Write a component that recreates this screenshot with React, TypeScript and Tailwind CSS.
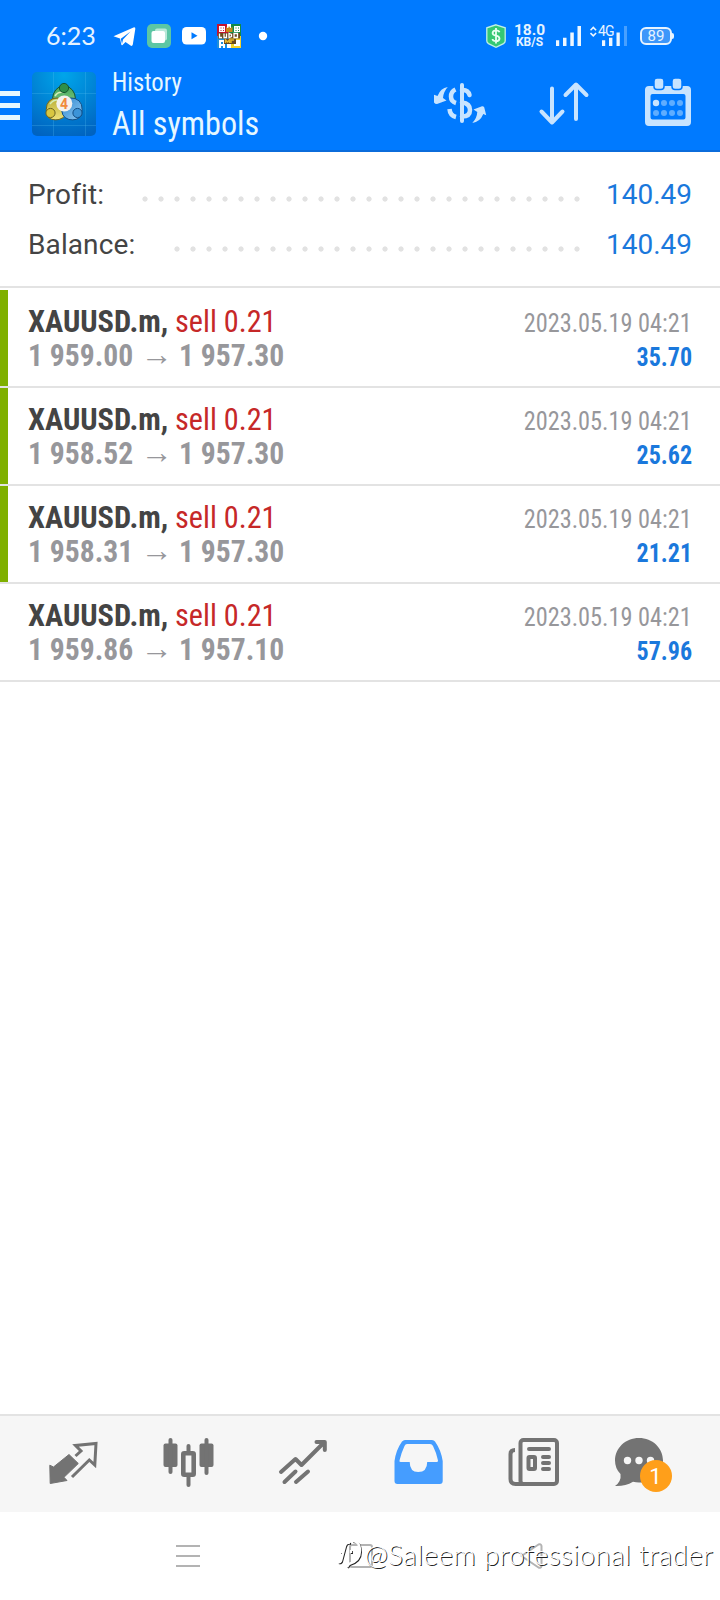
import type { ReactNode } from "react";

const deals = [
  { open: "1 959.00", close: "1 957.30", profit: "35.70", marked: true },
  { open: "1 958.52", close: "1 957.30", profit: "25.62", marked: true },
  { open: "1 958.31", close: "1 957.30", profit: "21.21", marked: true },
  { open: "1 959.86", close: "1 957.10", profit: "57.96", marked: false },
];

function StatusBar() {
  return (
    <div className="flex h-[71px] items-start pt-[24px] text-[#e6f3ff]">
      <div className="ml-[46px] w-[66px] font-['Lato',sans-serif] text-[25px] leading-[23px]">6:23</div>
      <svg className="h-6 w-[156px]" viewBox="112 24 156 24">
        <path fill="#fff" d="M113.5 36.2 133.5 27.4Q135.600 26.800 135.300 29L132.800 44.500Q132.300 46.500 130.500 45.600L125.500 42 122.500 45Q121.600 45.600 121.300 44.500L120 38.500Z" />
        <path d="M120.800 38.800 130.500 31.500 123 39.500 122 44" fill="#007aff" />
        <rect x="147" y="24" width="24" height="24" rx="5" fill="#5cc6a4" />
        <rect x="155" y="28.500" width="12" height="12" rx="2" fill="#b9e8d8" />
        <rect x="151.500" y="31" width="13.500" height="12" rx="2" fill="#fff" />
        <rect x="182" y="27" width="24" height="17.500" rx="4.500" fill="#fff" />
        <path d="M191.500 32.300v7l6-3.500z" fill="#007aff" />
        <path fill="#c4122f" d="M217 24h12v12h-12z" />
        <path fill="#128a4a" d="M229 24h12v12h-12z" />
        <path fill="#1f8fd8" d="M217 36h12v12h-12z" />
        <path fill="#f2d32c" d="M229 36h12v12h-12z" />
        <path fill="#fff" d="M219 26h6v6h-6zM234 26h6v6h-6zM219 40h6v8h-6zM234 40h6v6h-6zM227 24h4v4h-4zM227 44h4v4h-4z" />
        <path fill="#c4122f" d="M220.500 27.500h1v1h-1zM223 27.500h1v1h-1zM220.500 30h1v1h-1zM223 30h1v1h-1z" />
        <path fill="#128a4a" d="M235.500 27.500h1v1h-1zM238 27.500h1v1h-1zM235.500 30h1v1h-1zM238 30h1v1h-1z" />
        <path fill="#1f8fd8" d="M221 42h2v2h-2zM221 46h2v2h-2z" />
        <path fill="#c98a1b" d="M226 26.500 228 28.500 229 26 230.500 28.500 232.500 26.500V32h-6.500z" />
        <path fill="#6b4a20" d="M218 33h22v5.500h-22zM224 39h12v5h-12z" />
        <path stroke="#fff" strokeWidth="1.300" fill="none" d="M219.500 33.500v4h2.500M224 33.500v4h2.500v-4M229 33.500v4l2.500-1v-2zM234 33.500h3.500v4H234z" />
        <path stroke="#e8b92c" strokeWidth="1.400" fill="none" d="M225.500 43v-3l2 2 2-2v3M231 43v-3h3" />
        <circle cx="263" cy="36" r="4.200" fill="#fff" />
      </svg>
      <svg className="ml-[218px] h-6 w-5" viewBox="0 0 20 24">
        <path d="M10 .8 19.200 3.800V17Q19.200 18.600 17.500 19.600L10 23.300 2.500 19.600Q.8 18.600.8 17V3.800Z" fill="#35c874" stroke="#bff0e4" strokeWidth="1.300" />
        <path d="M13.500 8.300Q12.900 6.300 10 6.300T6.600 8.900Q6.600 11 10 11.600T13.500 14.600Q13.300 17.200 10 17.200T6.500 15M10 4v15.500" fill="none" stroke="#e6fff2" strokeWidth="1.800" />
      </svg>
      <div className="ml-[5px] flex w-[37px] flex-col items-center font-['Roboto',sans-serif] font-bold">
        <span className="text-[15.500px] leading-[13px]">18.0</span>
        <span className="text-[12px] leading-[11px]">KB/S</span>
      </div>
      <svg className="ml-[7px] h-6 w-[26px]" viewBox="555 24 26 24" fill="#eef7ff">
        <path d="M556 40.300h3.200V46H556zM563 37.700h3.500V46H563zM570.300 32.500h3.500V46h-3.500zM577.500 26h3.500v20h-3.500z" />
      </svg>
      <div className="relative ml-[9px] h-6 w-[38px]">
        <svg className="h-6 w-[38px]" viewBox="591 24 38 24" fill="#eef7ff">
          <path d="M591.500 30.300 594.300 27.500 597.100 30.300M591.500 33 594.300 35.800 597.100 33" fill="none" stroke="#eef7ff" strokeWidth="1.600" />
          <path d="M603 40.300h3.200V46H603zM610 37.700h3.400V46H610zM617.500 32.500h3.300V46h-3.300z" />
          <path d="M625 26h3v20h-3z" opacity=".3" />
        </svg>
        <span className="absolute left-[8px] top-px font-['Roboto',sans-serif] text-[14px] leading-[13px] tracking-[-0.800px]">4G</span>
      </div>
      <div className="ml-[12px] mt-[3px] flex items-center">
        <div className="flex h-[18px] w-[32px] items-center justify-center rounded-[6px] border-2 border-[#e6f3ff] bg-[#3d97fa] font-['Roboto',sans-serif] text-[15px] leading-none">89</div>
        <div className="h-[6px] w-[2px] rounded-r bg-[#e6f3ff]" />
      </div>
    </div>
  );
}

function AppLogo() {
  return (
    <svg className="ml-3 mt-px h-16 w-16" viewBox="0 0 64 64">
      <defs>
        <radialGradient id="logoBg" cx=".5" cy=".05" r="1">
          <stop offset="0" stopColor="#00a5ea" />
          <stop offset="1" stopColor="#0063c0" />
        </radialGradient>
        <linearGradient id="logoGreen" x1="0" y1="0" x2="0" y2="1">
          <stop offset="0" stopColor="#3fa557" />
          <stop offset="1" stopColor="#8fd08c" />
        </linearGradient>
        <linearGradient id="logoYellow" x1="0" y1="0" x2="0" y2="1">
          <stop offset="0" stopColor="#b9ae36" />
          <stop offset="1" stopColor="#efe27b" />
        </linearGradient>
        <linearGradient id="logoBlue" x1="0" y1="0" x2="1" y2="1">
          <stop offset="0" stopColor="#2f87cf" />
          <stop offset="1" stopColor="#8cc8f2" />
        </linearGradient>
      </defs>
      <rect width="64" height="64" rx="5" fill="url(#logoBg)" />
      <path d="M0 21.500h64M0 53.500h64M21.500 0v64M53.500 0v64" stroke="#5cc4f5" strokeOpacity=".25" />
      <path d="M32 13Q43 16 43.500 27 44 36 32 37 20 36 20.500 27 21 16 32 13Z" fill="url(#logoGreen)" stroke="#17552f" />
      <path d="M15 44Q12 30 21 26.500 31 24 34 33 37 45 27 47.500 19 49 15 44Z" fill="url(#logoYellow)" stroke="#6b6320" />
      <path d="M49 44Q53 30 43 26.500 33 24 30 33 28 45 37 47.500 45 49 49 44Z" fill="url(#logoBlue)" stroke="#124d84" />
      <path d="M23 24Q26 19 32 20.500M18 32Q21 28 25 28" fill="none" stroke="#d6efb8" strokeWidth="1.500" />
      <circle cx="32" cy="16" r="4.600" fill="#2f8f48" stroke="#17552f" />
      <circle cx="18.500" cy="41" r="4.600" fill="#d8c640" stroke="#6b6320" />
      <circle cx="45.500" cy="41" r="4.600" fill="#3c94d8" stroke="#124d84" />
      <circle cx="32.300" cy="31.500" r="8" fill="#f4f1ee" />
      <text x="32" y="36.500" textAnchor="middle" fontFamily="Roboto, sans-serif" fontSize="14" fontWeight="700" fill="#f08a3c">4</text>
    </svg>
  );
}

function HeaderActions() {
  return (
    <div className="ml-auto flex pr-[26px]">
      <svg className="mt-[6px] h-14 w-14" viewBox="431 77 56 56" fill="none" stroke="#c8e4ff" strokeWidth="4" strokeLinecap="round">
        <path d="M462 85v36" />
        <path d="M455.500 89.500Q451 91.500 451 96.500T456 103" strokeWidth="4.500" strokeLinecap="butt" />
        <path d="M462 90Q468 89.500 469.500 95" strokeWidth="4.500" />
        <path d="M462 102.500Q470 103.500 470 110T462 116.500" strokeWidth="4.500" />
        <path d="M449.500 109Q450 115.500 456 117" strokeWidth="4.500" strokeLinecap="butt" />
        <path stroke="none" fill="#c8e4ff" d="M447.800 87Q440.500 88 437.500 96L434 94.800V102.500Q435 104 437 104L446.500 100.500 443 98Q443.500 91.500 447.800 87ZM472.300 123Q480 122 483.300 114L486.200 115.200 484.200 107.200Q483.500 106 482 106.200L473.500 109.500 477.300 112Q477 118 472.300 123Z" />
      </svg>
      <svg className="ml-[49px] mt-[6px] h-14 w-14" viewBox="536 77 56 56" fill="none" stroke="#c8e4ff" strokeWidth="4" strokeLinecap="round" strokeLinejoin="round">
        <path d="M552 88.500V122M541.500 111.500 552 122.500 562.500 111.500M576 119V85M565.500 95 576 84.500 586.500 95" />
      </svg>
      <svg className="ml-[49px] mt-[6px] h-14 w-[53px]" viewBox="641 77 53 56">
        <path fillRule="evenodd" fill="#c8e4ff" d="M649 86h38q4 0 4 4v32q0 4-4 4h-38q-4 0-4-4V90q0-4 4-4ZM652.500 94q-2 0-2 2v21.500q0 2 2 2h31q2 0 2-2V96q0-2-2-2Z" />
        <rect x="654" y="78" width="10" height="11.500" rx="3" fill="#c8e4ff" stroke="#007aff" strokeWidth="1.500" />
        <rect x="672" y="78" width="10" height="11.500" rx="3" fill="#c8e4ff" stroke="#007aff" strokeWidth="1.500" />
        <circle cx="656" cy="103" r="3.200" fill="#c8e4ff" />
        {[664, 672, 680].map((x) => <circle key={x} cx={x} cy="103" r="3" fill="#5fadff" />)}
        {[656, 664, 672, 680].map((x) => <circle key={x} cx={x} cy="113" r="3" fill="#5fadff" />)}
      </svg>
    </div>
  );
}

function Total({ label, value, dots }: { label: string; value: string; dots: string }) {
  return (
    <div className="flex h-[50px] items-center pr-[28px] pl-[28px] text-[28px]">
      <span className="tracking-[0.100px] text-[#444]">{label}</span>
      <span className={`${dots} mt-[8px] ml-auto h-[6px] bg-[radial-gradient(circle,#e2e2e2_2.200px,transparent_3px)] bg-[length:16px_6px]`} />
      <span className="w-[107px] text-right text-[#1a78dc]">{value}</span>
    </div>
  );
}

function Tab({ box, children }: { box: string; children: ReactNode }) {
  return <svg className="h-24 w-[115px]" viewBox={box}>{children}</svg>;
}

export default function App() {
  return (
    <div className="relative flex h-[1600px] w-[720px] flex-col overflow-hidden bg-white font-['Roboto',sans-serif]">
      <header className="h-[152px] border-b-2 border-[#0b6cdb] bg-[#007aff]">
        <StatusBar />
        <div className="flex h-[79px]">
          <div className="mt-5 flex w-5 flex-col gap-[7px]">
            <i className="h-[5px] bg-[#e6f7ff]" />
            <i className="h-[5px] bg-[#e6f7ff]" />
            <i className="h-[5px] bg-[#e6f7ff]" />
          </div>
          <AppLogo />
          <div className="ml-4 flex flex-col items-start font-['Roboto_Condensed',sans-serif] text-[#e6f7ff]">
            <span className="-mt-[4px] origin-left scale-x-[0.950] text-[26px] leading-[30px]">History</span>
            <span className="mt-[6px] origin-left scale-x-[0.947] text-[34px] leading-[40px]">All symbols</span>
          </div>
          <HeaderActions />
        </div>
      </header>

      <section className="h-[134px] pt-[18px]">
        <Total label="Profit:" value="140.49" dots="w-[448px]" />
        <Total label="Balance:" value="140.49" dots="w-[416px]" />
      </section>

      <main className="border-t-2 border-[#e3e3e3] pt-[2px] font-['Roboto_Condensed',sans-serif]">
        {deals.map((d, i) => (
          <article key={i} className="flex h-[98px] items-start border-b-2 border-[#e3e3e3]">
            <div className={`h-[96px] w-[8px] ${d.marked ? "bg-[#7fb000]" : ""}`} />
            <div className="ml-5 pt-[14px] text-[32px] leading-[34px] whitespace-nowrap">
              <div className="flex">
                <div className="w-[147px]">
                  <span className="block w-fit origin-left scale-x-[0.950] font-bold text-[#444]">XAUUSD.m,</span>
                </div>
                <span className="origin-left scale-x-[0.945] text-[#c62828]">sell 0.21</span>
              </div>
              <div className="flex font-bold text-[#97979b]">
                <div className="w-[112.500px]">
                  <span className="block w-fit origin-left scale-x-[0.925]">{d.open}</span>
                </div>
                <span className="-mt-px w-[38px]">→</span>
                <span className="origin-left scale-x-[0.925]">{d.close}</span>
              </div>
            </div>
            <div className="ml-auto flex flex-col items-end pt-[16px] pr-[28px] text-[26px] leading-[34px]">
              <span className="origin-right scale-x-[0.935] text-[#97979b]">2023.05.19 04:21</span>
              <span className="origin-right scale-x-[0.925] font-bold text-[#1a78dc]">{d.profit}</span>
            </div>
          </article>
        ))}
      </main>

      <footer className="mt-auto flex h-[98px] border-t-2 border-[#e3e3e3] bg-[#f6f6f6] pl-4">
        <Tab box="16 1416 115 96">
          <path fill="#737373" stroke="#737373" strokeLinejoin="round" d="M49.800 1465.200 53.500 1467 69 1454.500 78.300 1463.500 64 1477.300 67 1480.500 50.200 1483.500Z" />
          <path fill="none" stroke="#737373" strokeWidth="3" d="M75.500 1456 81 1451 75.500 1445.500 96 1443.500 94.800 1465 89.300 1460 72 1477" />
        </Tab>
        <Tab box="131 1416 115 96">
          <g fill="#737373">
            <rect x="163.500" y="1443.500" width="14" height="23.500" rx="2" />
            <rect x="168.500" y="1438" width="4" height="36" rx="2" />
            <rect x="199.500" y="1443.500" width="14" height="23.500" rx="2" />
            <rect x="204.500" y="1438" width="4" height="37" rx="2" />
            <rect x="186.500" y="1444" width="4" height="9" rx="2" />
            <rect x="186.500" y="1475" width="4" height="12" rx="2" />
          </g>
          <rect x="183.300" y="1453.300" width="10.400" height="21.500" rx="1" fill="none" stroke="#737373" strokeWidth="4.600" />
        </Tab>
        <Tab box="246 1416 115 96">
          <path fill="none" stroke="#737373" strokeWidth="4" strokeLinecap="round" strokeLinejoin="round" d="M281 1472 295.500 1459 301.500 1465 324.500 1442M316.500 1442H324.800V1450M284.500 1482 295.500 1471.500M296 1482 308 1471.500" />
        </Tab>
        <Tab box="361 1416 115 96">
          <path fill="#459dff" d="M394.500 1461Q396 1450 402 1441.500 403.300 1440 405 1440h27q2 0 3 1.500Q441 1450 442.700 1461v20q0 3-3 3h-42.200q-3 0-3-3Z" />
          <path fill="#f6f6f6" d="M407 1444h23q2 0 3 2 3.500 7 5 14.500.200 1.500-1.500 1.500H427.200q0 10-9 10-8.500 0-8.500-10H401q-2 0-1.500-1.500 1.500-7 5-14.500.800-2 2.500-2Z" />
        </Tab>
        <Tab box="476 1416 115 96">
          <g fill="none" stroke="#737373" strokeWidth="4" strokeLinecap="round">
            <rect x="520.500" y="1440" width="36.500" height="44" rx="3" />
            <path d="M515 1450Q510.500 1450 510.500 1454v25q0 5 5 5h8" strokeLinecap="butt" />
            <path d="M529 1449h20M543 1457h6M543 1463h6M543 1469h6" />
            <rect x="528.500" y="1457" width="6.500" height="12" rx="1" />
          </g>
        </Tab>
        <Tab box="591 1416 115 96">
          <path fill="#737373" d="M639 1438c13.500 0 24 10 24 22.500s-10.500 22-24 22q-3 0-6-.800-8 4.800-18 4.300 6.500-4.500 5.500-12-5.500-5.500-5.500-13.500c0-12.500 10.500-22.500 24-22.500Z" />
          <g fill="#f6f6f6">
            <circle cx="627.500" cy="1460.500" r="3.700" />
            <circle cx="639" cy="1460.500" r="3.700" />
            <circle cx="650.500" cy="1460.500" r="3.700" />
          </g>
          <circle cx="656" cy="1476" r="16" fill="#ff9f1a" />
          <text x="655.500" y="1483.500" textAnchor="middle" fontFamily="Roboto, sans-serif" fontSize="22" fill="#fff">1</text>
        </Tab>
      </footer>

      <nav className="flex h-[88px] items-center bg-white pl-[176px]">
        <svg className="h-6 w-6" viewBox="0 0 24 24" stroke="#b3b3b3" strokeWidth="2">
          <path d="M0 2h24M0 12h24M0 22h24" />
        </svg>
        <svg className="ml-[149px] h-6 w-6" viewBox="0 0 24 24" fill="none" stroke="#b3b3b3" strokeWidth="2">
          <rect x="1" y="1" width="22" height="22" rx="2" />
        </svg>
        <svg className="ml-[146px] h-7 w-6" viewBox="0 0 24 28" fill="none" stroke="#b3b3b3" strokeWidth="2" strokeLinejoin="round">
          <path d="M2.500 14 19.500 2.500Q22 1.500 22.500 4V24Q22 26.500 19.500 25.500Z" />
        </svg>
      </nav>

      <div className="absolute right-[7px] bottom-[26px] flex items-center text-white">
        <svg className="mr-[2px] h-8 w-[26px]" viewBox="0 0 26 32" fill="none">
          <g transform="translate(1 1)" stroke="#222" strokeWidth="2">
            <path d="M13 5Q9 4 8 8L4 23Q3 25 1 24M3 14H7M14 12V15M15 3Q23 3 23 13T12 26L10 29" />
          </g>
          <g stroke="#fff" strokeWidth="2.400">
            <path d="M13 5Q9 4 8 8L4 23Q3 25 1 24M3 14H7M14 12V15M15 3Q23 3 23 13T12 26L10 29" />
          </g>
        </svg>
        <span className="font-['Lato',sans-serif] text-[28px] leading-[40px] font-light tracking-[0.250px] whitespace-nowrap [text-shadow:1px_1px_0.500px_#222]">@Saleem professional trader</span>
      </div>
    </div>
  );
}
